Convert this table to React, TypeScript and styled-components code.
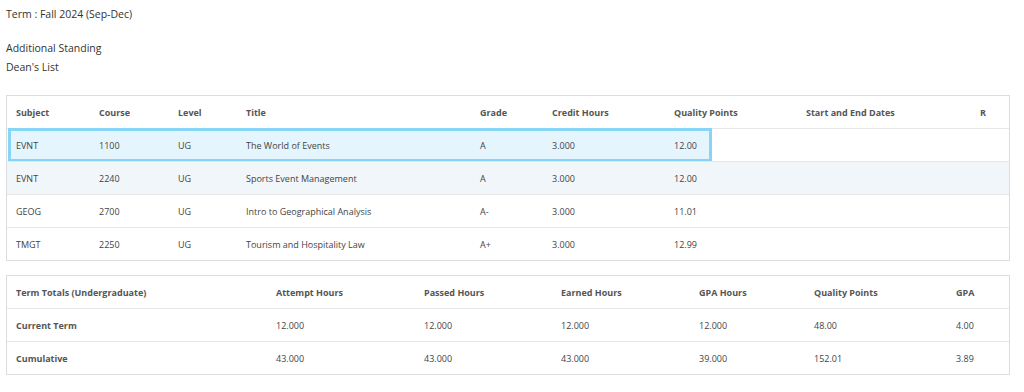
import styled, { createGlobalStyle } from "styled-components";

const GlobalStyle = createGlobalStyle`
  body {
    margin: 0;
    background: #ffffff;
    font-family: "Open Sans", "Liberation Sans", sans-serif;
    color: #444444;
  }
`;

// 成績データ
const courses = [
  { subject: "EVNT", course: "1100", level: "UG", title: "The World of Events", grade: "A", credit: "3.000", points: "12.00" },
  { subject: "EVNT", course: "2240", level: "UG", title: "Sports Event Management", grade: "A", credit: "3.000", points: "12.00" },
  { subject: "GEOG", course: "2700", level: "UG", title: "Intro to Geographical Analysis", grade: "A-", credit: "3.000", points: "11.01" },
  { subject: "TMGT", course: "2250", level: "UG", title: "Tourism and Hospitality Law", grade: "A+", credit: "3.000", points: "12.99" },
];

const totals = [
  { label: "Current Term", values: ["12.000", "12.000", "12.000", "12.000", "48.00", "4.00"] },
  { label: "Cumulative", values: ["43.000", "43.000", "43.000", "39.000", "152.01", "3.89"] },
];

const courseCols = "83px 79px 68px 234px 72px 122px 132px 174px 1fr";
const totalsCols = "260px 148px 137px 138px 115px 142px 1fr";

export default function App() {
  return (
    <>
      <GlobalStyle />
      <Page>
        <TermTitle>Term : Fall 2024 (Sep-Dec)</TermTitle>
        <Standing>
          <StandingLine>Additional Standing</StandingLine>
          <StandingLine>Dean's List</StandingLine>
        </Standing>

        <TableBox>
          <Row $cols={courseCols}>
            {["Subject", "Course", "Level", "Title", "Grade", "Credit Hours", "Quality Points", "Start and End Dates", "R"].map((h) => (
              <HeadCell key={h}>{h}</HeadCell>
            ))}
          </Row>
          {courses.map((c, i) => (
            <Row key={i} $cols={courseCols} $shaded={i === 1}>
              {i === 0 && <SelectedMark />}
              <Cell>{c.subject}</Cell>
              <Cell>{c.course}</Cell>
              <Cell>{c.level}</Cell>
              <Cell>{c.title}</Cell>
              <Cell>{c.grade}</Cell>
              <Cell>{c.credit}</Cell>
              <Cell>{c.points}</Cell>
              <Cell />
              <Cell />
            </Row>
          ))}
        </TableBox>

        <TableBox>
          <Row $cols={totalsCols}>
            {["Term Totals (Undergraduate)", "Attempt Hours", "Passed Hours", "Earned Hours", "GPA Hours", "Quality Points", "GPA"].map((h) => (
              <HeadCell key={h}>{h}</HeadCell>
            ))}
          </Row>
          {totals.map((t) => (
            <Row key={t.label} $cols={totalsCols}>
              <HeadCell>{t.label}</HeadCell>
              {t.values.map((v, j) => (
                <Cell key={j}>{v}</Cell>
              ))}
            </Row>
          ))}
        </TableBox>
      </Page>
    </>
  );
}

const Page = styled.div`
  width: 1024px;
  height: 392px;
  padding: 6px 14px 0 6px;
  box-sizing: border-box;
`;

const TermTitle = styled.div`
  font-size: 10.5px;
  line-height: 16px;
  color: #333333;
`;

const Standing = styled.div`
  margin-top: 17px;
  padding-bottom: 18px;
`;

const StandingLine = styled.div`
  font-size: 10.5px;
  line-height: 19px;
  color: #333333;
`;

const TableBox = styled.div`
  border: 1px solid #dddddd;
  margin-bottom: 14px;
`;

const Row = styled.div<{ $cols: string; $shaded?: boolean }>`
  position: relative;
  display: grid;
  grid-template-columns: ${(p) => p.$cols};
  height: 32px;
  align-items: center;
  background: ${(p) => (p.$shaded ? "#f1f6fa" : "transparent")};
  & + & {
    border-top: 1px solid #e6e6e6;
  }
`;

const SelectedMark = styled.div`
  position: absolute;
  left: 1px;
  top: -1px;
  width: 704px;
  height: 34px;
  box-sizing: border-box;
  border: 3px solid #86d4f6;
  background: #e4f5fd;
`;

const HeadCell = styled.div`
  position: relative;
  padding-left: 9px;
  font-size: 9px;
  font-weight: 700;
  color: #555555;
  white-space: nowrap;
`;

const Cell = styled.div`
  position: relative;
  padding-left: 9px;
  font-size: 9px;
  color: #444444;
  white-space: nowrap;
`;
